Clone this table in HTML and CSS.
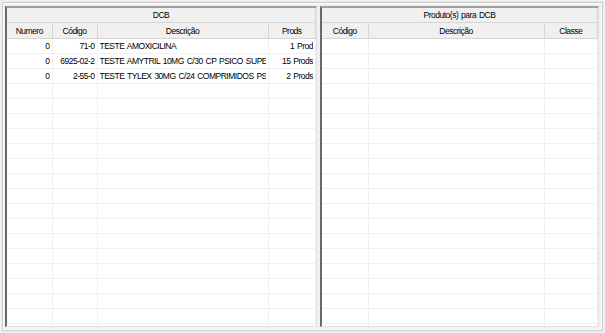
FILE: index.html
```html
<!DOCTYPE html>
<html lang="pt-BR">
<head>
  <meta charset="UTF-8">
  <title>DCB</title>
  <link rel="stylesheet" href="styles.css">
</head>
<body>
  <div class="frame">
    <section class="panel panel-dcb">
      <div class="panel-title">DCB</div>
      <table class="grid">
        <colgroup>
          <col style="width:45px"><col style="width:45px"><col style="width:171px"><col>
        </colgroup>
        <thead>
          <tr><th>Numero</th><th>Código</th><th>Descrição</th><th>Prods</th></tr>
        </thead>
        <tbody id="dcbRows"></tbody>
      </table>
    </section>
    <section class="panel panel-prod">
      <div class="panel-title">Produto(s) para DCB</div>
      <table class="grid">
        <colgroup>
          <col style="width:46px"><col style="width:176px"><col>
        </colgroup>
        <thead>
          <tr><th>Código</th><th>Descrição</th><th>Classe</th></tr>
        </thead>
        <tbody id="prodRows"></tbody>
      </table>
    </section>
  </div>
  <script>
    const dcb = [
      ["0", "71-0", "TESTE AMOXICILINA", "1 Prod"],
      ["0", "6925-02-2", "TESTE AMYTRIL 10MG C/30 CP PSICO SUPERA", "15 Prods"],
      ["0", "2-55-0", "TESTE TYLEX 30MG C/24 COMPRIMIDOS PSICOTROPICO", "2 Prods"]
    ];
    const ROWS = 20;

    // fill both grids with empty lines below the data
    function fill(tbody, cols, data, align) {
      let html = "";
      for (let i = 0; i < ROWS; i++) {
        const row = data[i] || [];
        html += "<tr>";
        for (let c = 0; c < cols; c++) {
          html += `<td class="${align[c]}"><span>${row[c] || ""}</span></td>`;
        }
        html += "</tr>";
      }
      tbody.innerHTML = html;
    }

    fill(document.getElementById("dcbRows"), 4, dcb, ["r", "r", "l", "r"]);
    fill(document.getElementById("prodRows"), 3, [], ["l", "l", "l"]);
  </script>
</body>
</html>
```
FILE: styles.css
```css
* {
  box-sizing: border-box;
}
body {
  margin: 0;
  background: #f0f0f0;
  font-family: 'Liberation Sans', Arial, sans-serif;
  font-size: 8.5px;
  letter-spacing: -0.5px;
  word-spacing: 1px;
  color: #000;
  width: 605px;
  height: 333px;
  overflow: hidden;
}
.frame {
  margin: 2px;
  height: 329px;
  border: 1px solid #c8c8c8;
  box-shadow: inset 1px 1px 0 #fff, inset -1px -1px 0 #fff;
  padding: 3px 3px 2px 2px;
  display: flex;
  gap: 3px;
}
.panel {
  height: 321px;
  background: #fff;
  border-top: 2px solid #a0a0a0;
  border-left: 2px solid #696969;
  border-right: 1px solid #e3e3e3;
  border-bottom: 1px solid #e3e3e3;
  overflow: hidden;
}
.panel-dcb {
  width: 312px;
}
.panel-prod {
  flex: 1;
}
.panel-title {
  height: 15px;
  line-height: 15px;
  text-align: center;
  background: #f0f0f0;
  border-bottom: 1px solid #d5d5d5;
  border-right: 1px solid #d5d5d5;
}
.grid {
  width: 100%;
  table-layout: fixed;
  border-collapse: collapse;
}
.grid th {
  height: 15px;
  padding: 1px 2px 0;
  font-weight: normal;
  background: #f0f0f0;
  border-right: 1px solid #d5d5d5;
  border-bottom: 1px solid #d5d5d5;
  text-align: center;
  white-space: nowrap;
  overflow: hidden;
}
.grid td {
  height: 15px;
  padding: 1px 2px 0;
  border-right: 1px solid #f0f0f0;
  border-bottom: 1px solid #f0f0f0;
  white-space: nowrap;
  overflow: hidden;
}
.grid td span {
  display: block;
  overflow: hidden;
}
.grid td.r {
  text-align: right;
}
.grid td.l {
  text-align: left;
}
```
